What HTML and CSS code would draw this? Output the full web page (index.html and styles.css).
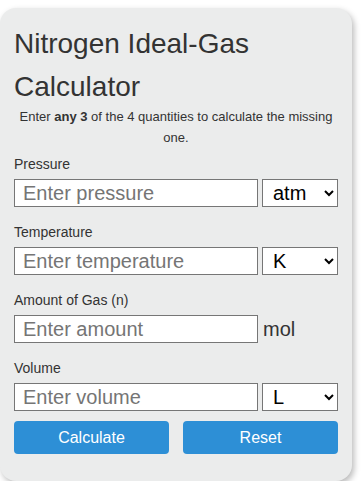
FILE: index.html
```html
<!DOCTYPE html>
<html lang="en">
<head>
<meta charset="utf-8">
<title>Nitrogen Ideal-Gas Calculator</title>
<link rel="stylesheet" href="styles.css">
</head>
<body>
<div class="card">
  <h1 class="title">Nitrogen Ideal-Gas Calculator</h1>
  <p class="intro">Enter <strong>any 3</strong> of the 4 quantities to calculate the missing one.</p>

  <div class="group">
    <label class="label" for="p">Pressure</label>
    <div class="row">
      <input class="field" id="p" type="text" placeholder="Enter pressure">
      <select class="unit"><option>atm</option></select>
    </div>
  </div>

  <div class="group">
    <label class="label" for="t">Temperature</label>
    <div class="row">
      <input class="field" id="t" type="text" placeholder="Enter temperature">
      <select class="unit"><option>K</option></select>
    </div>
  </div>

  <div class="group">
    <label class="label" for="n">Amount of Gas (n)</label>
    <div class="row">
      <input class="field" id="n" type="text" placeholder="Enter amount">
      <span class="unit-text">mol</span>
    </div>
  </div>

  <div class="group last">
    <label class="label" for="v">Volume</label>
    <div class="row">
      <input class="field" id="v" type="text" placeholder="Enter volume">
      <select class="unit"><option>L</option></select>
    </div>
  </div>

  <div class="buttons">
    <button class="btn" type="button">Calculate</button>
    <button class="btn" type="button">Reset</button>
  </div>
</div>
</body>
</html>
```

FILE: styles.css
```css
html, body {
  margin: 0;
  padding: 0;
  background: #ffffff;
}

body {
  padding-top: 8px;
  font-family: "Liberation Sans", Arial, sans-serif;
  color: #333333;
}

.card {
  width: 352px;
  box-sizing: border-box;
  padding: 14px 14px 27px 14px;
  background: #ebecec;
  border-radius: 16px;
  box-shadow: 2px 3px 6px rgba(0, 0, 0, 0.28);
}

.title {
  margin: 0;
  font-size: 28px;
  font-weight: normal;
  line-height: 43px;
  color: #333333;
}

.intro {
  margin: -2px 0 8px 0;
  font-size: 13px;
  line-height: 21px;
  text-align: center;
  color: #333333;
}

.intro strong {
  font-weight: bold;
}

.group {
  margin-bottom: 17px;
}

.group.last {
  margin-bottom: 10px;
}

.label {
  display: block;
  font-size: 14px;
  line-height: 16px;
  margin-bottom: 7px;
  color: #333333;
}

.row {
  display: grid;
  grid-template-columns: 244px 76px;
  column-gap: 4px;
  align-items: center;
}

.field {
  box-sizing: border-box;
  width: 244px;
  height: 28px;
  margin: 0;
  padding: 0 8px;
  border: 1px solid #767676;
  border-radius: 0;
  background: #ffffff;
  font-family: "Liberation Sans", Arial, sans-serif;
  font-size: 20px;
  color: #000000;
}

.field::placeholder {
  color: #757575;
}

.unit {
  box-sizing: border-box;
  width: 76px;
  height: 28px;
  margin: 0;
  padding: 0 4px 0 6px;
  border: 1px solid #767676;
  border-radius: 0;
  background-color: #ffffff;
  font-family: "Liberation Sans", Arial, sans-serif;
  font-size: 20px;
  color: #000000;
}

.unit-text {
  padding-left: 1px;
  font-size: 20px;
  color: #333333;
}

.buttons {
  display: grid;
  grid-template-columns: 1fr 1fr;
  column-gap: 14px;
}

.btn {
  height: 33px;
  margin: 0;
  border: none;
  border-radius: 4px;
  background: #2d8fd6;
  color: #ffffff;
  font-family: "Liberation Sans", Arial, sans-serif;
  font-size: 16px;
}
```
